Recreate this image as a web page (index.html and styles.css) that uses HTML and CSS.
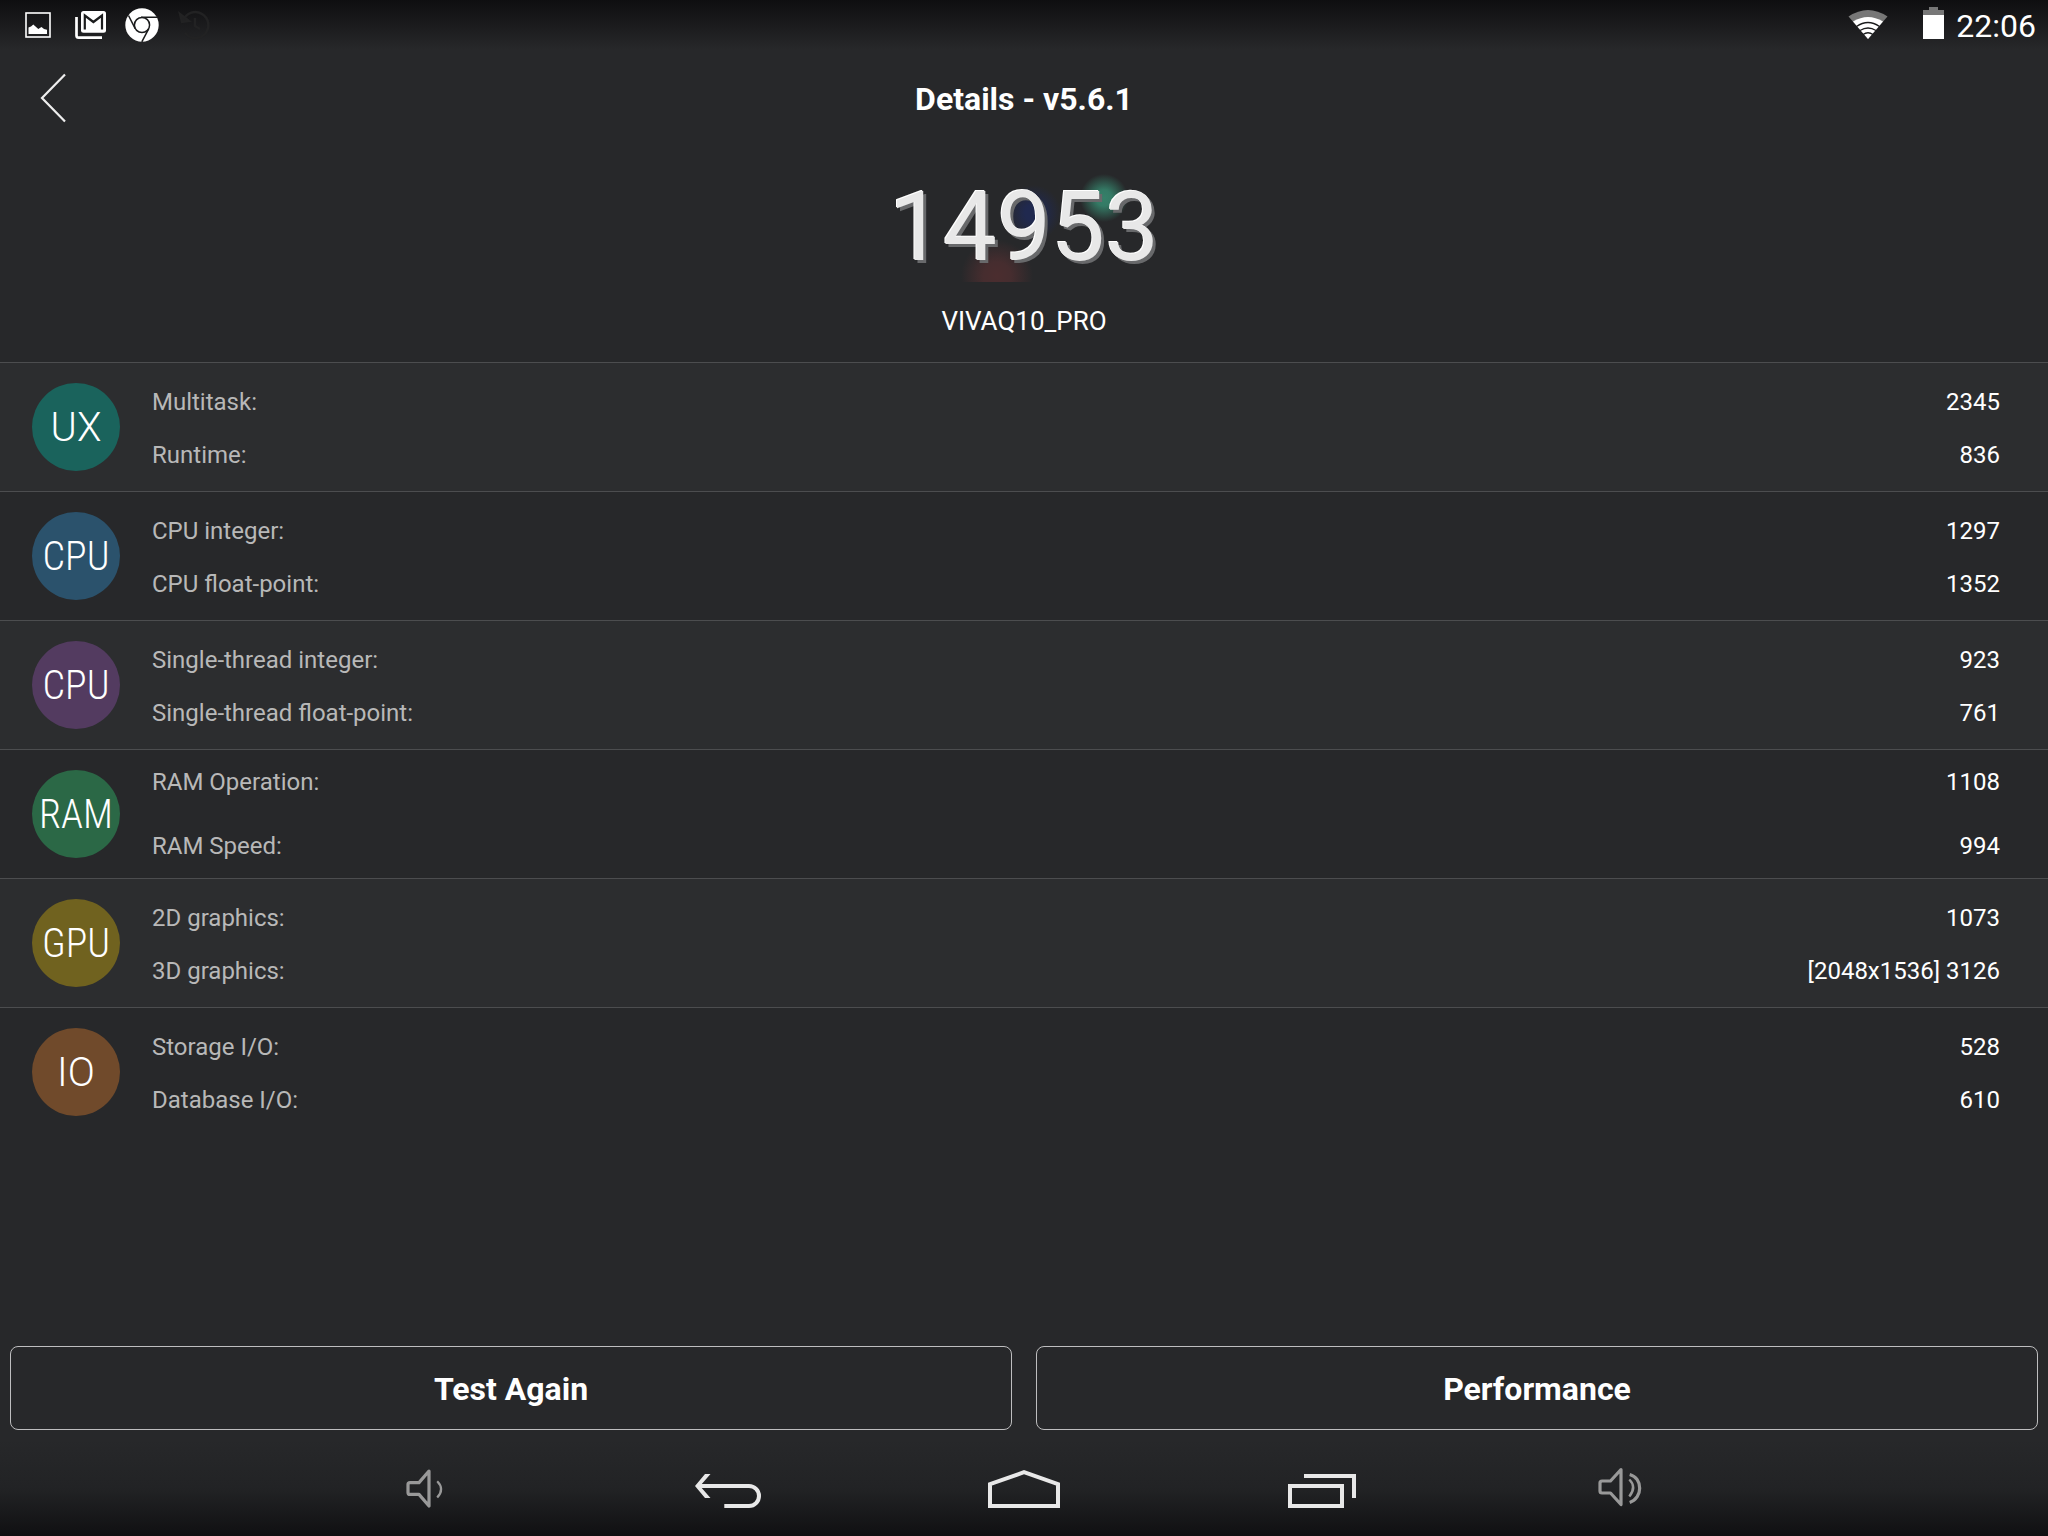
FILE: index.html
```
<!DOCTYPE html>
<html lang="en">
<head>
    <meta charset="UTF-8">
    <meta name="viewport" content="width=device-width, initial-scale=1.0">
    <title>Details - v5.6.1</title>
    <link rel="stylesheet" href="styles.css">
</head>
<body>
    <!-- Status bar -->
    <div class="status-bar">
        <div class="notifications">
            <svg width="36" height="36" viewBox="0 0 36 36">
                <rect x="6" y="6" width="24" height="24" fill="none" stroke="#fff" stroke-width="1.6"/>
                <path d="M8.5 27V20.5L11 19.5L13.3 17.5L18.3 22L21.5 20L24 22L27 22.7V27Z" fill="#fff"/>
            </svg>
            <svg width="36" height="36" viewBox="0 0 36 36">
                <path d="M4.5 10V28.4Q4.5 30.6 6.7 30.6H30" fill="none" stroke="#fff" stroke-width="2.7"/>
                <rect x="9" y="4" width="25" height="21.7" rx="2.5" fill="#fff"/>
                <path d="M12.8 22.5V8.5L21.4 15L30 8.5V22.5" fill="none" stroke="#1b1c1d" stroke-width="2.2"/>
            </svg>
            <svg width="36" height="36" viewBox="0 0 36 36">
                <circle cx="18" cy="18" r="16.7" fill="#fff"/>
                <circle cx="18" cy="18" r="7.6" fill="none" stroke="#1b1c1d" stroke-width="1.5"/>
                <path d="M17 10.2H33.5M4.5 8.5L11.2 21.6M24.8 21.6L17.8 34.8" stroke="#1b1c1d" stroke-width="1.5"/>
            </svg>
            <svg width="36" height="36" viewBox="0 0 36 36" fill="none" stroke="#222223" stroke-width="2.4">
                <path d="M7 14A13 13 0 1 1 9 26"/>
                <path d="M4 7L6 15L13 14Z" fill="#222223"/>
                <path d="M19 11V19L24 22"/>
            </svg>
        </div>
        <div class="system-icons">
            <svg class="wifi" width="40" height="30" viewBox="0 0 40 30">
                <path d="M20 29L0.5 6.5Q20 -6.5 39.5 6.5Z" fill="#777"/>
                <path d="M20 29L5 11.5Q20 2.5 35 11.5Z" fill="#fff"/>
                <path d="M8.5 16.5Q20 8.5 31.5 16.5M12 20.5Q20 15.5 28 20.5M15 24.5Q20 21 25 24.5" fill="none" stroke="#1b1c1d" stroke-width="1.3"/>
            </svg>
            <svg class="battery" width="21" height="32" viewBox="0 0 21 32">
                <path d="M6 0H15V3H21V8H0V3H6Z" fill="#777"/>
                <path d="M0 8H21V32H0Z" fill="#fff"/>
            </svg>
            <span class="clock">22:06</span>
        </div>
    </div>

    <header class="header">
        <button class="back" aria-label="Back">
            <svg width="28" height="50" viewBox="0 0 28 50" fill="none" stroke="#eee" stroke-width="2.2">
                <path d="M25 1.5L2 25L25 48.5"/>
            </svg>
        </button>
        <h1>Details - v5.6.1</h1>
    </header>

    <main>
        <div class="summary">
            <div class="score">14953</div>
            <p class="device">VIVAQ10_PRO</p>
        </div>

        <section class="group">
            <div class="badge wide ux">UX</div>
            <dl>
                <div><dt>Multitask:</dt><dd>2345</dd></div>
                <div><dt>Runtime:</dt><dd>836</dd></div>
            </dl>
        </section>
        <section class="group">
            <div class="badge cpu">CPU</div>
            <dl>
                <div><dt>CPU integer:</dt><dd>1297</dd></div>
                <div><dt>CPU float-point:</dt><dd>1352</dd></div>
            </dl>
        </section>
        <section class="group">
            <div class="badge thread">CPU</div>
            <dl>
                <div><dt>Single-thread integer:</dt><dd>923</dd></div>
                <div><dt>Single-thread float-point:</dt><dd>761</dd></div>
            </dl>
        </section>
        <section class="group spaced">
            <div class="badge ram">RAM</div>
            <dl>
                <div><dt>RAM Operation:</dt><dd>1108</dd></div>
                <div><dt>RAM Speed:</dt><dd>994</dd></div>
            </dl>
        </section>
        <section class="group">
            <div class="badge gpu">GPU</div>
            <dl>
                <div><dt>2D graphics:</dt><dd>1073</dd></div>
                <div><dt>3D graphics:</dt><dd>[2048x1536] 3126</dd></div>
            </dl>
        </section>
        <section class="group">
            <div class="badge wide io">IO</div>
            <dl>
                <div><dt>Storage I/O:</dt><dd>528</dd></div>
                <div><dt>Database I/O:</dt><dd>610</dd></div>
            </dl>
        </section>
    </main>

    <div class="actions">
        <button>Test Again</button>
        <button>Performance</button>
    </div>

    <!-- System navigation -->
    <nav class="nav-bar">
        <button aria-label="Volume down">
            <svg width="96" height="96" viewBox="0 0 96 96" fill="none" stroke="#999" stroke-width="3.2" stroke-linejoin="round">
                <path d="M37 42.6H28Q26 42.6 26 44.6V52.4Q26 54.4 28 54.4H37L47 66V31Z"/>
                <path d="M55.2 41.2Q63 49 55.2 57.6" stroke-width="2.2"/>
            </svg>
        </button>
        <button aria-label="Back">
            <svg width="96" height="96" viewBox="0 0 96 96">
                <path d="M45.3 66H70A10 10 0 0 0 70 46H19" fill="none" stroke="#e8e8e8" stroke-width="4"/>
                <path d="M16 46L26 34H31.5L21 46L31.5 58H26Z" fill="#e8e8e8"/>
            </svg>
        </button>
        <button aria-label="Home">
            <svg width="96" height="96" viewBox="0 0 96 96" fill="none" stroke="#e8e8e8" stroke-width="4">
                <path d="M14 66V44.2L48 32.2L82 44.2V66Z"/>
            </svg>
        </button>
        <button aria-label="Recent apps">
            <svg width="96" height="96" viewBox="0 0 96 96" fill="none" stroke="#e8e8e8" stroke-width="4">
                <rect x="17" y="46" width="52" height="20"/>
                <path d="M31 36H81V58"/>
            </svg>
        </button>
        <button aria-label="Volume up">
            <svg width="96" height="96" viewBox="0 0 96 96" fill="none" stroke="#999" stroke-width="3.2" stroke-linejoin="round">
                <path d="M40.5 41H32Q30 41 30 43V51Q30 53 32 53H40.5L51 64.5V29.5Z"/>
                <path d="M59.3 39.5Q67 47 59.3 56.5" stroke-width="2.4"/>
                <path d="M59.7 34.5C73 38 73 58 59.7 62.5"/>
            </svg>
        </button>
    </nav>
</body>
</html>
```
FILE: styles.css
```
body {
    margin: 0;
    min-height: 100vh;
    display: flex;
    flex-direction: column;
    background-color: #27282a;
    color: #fff;
    font-family: Roboto, "Liberation Sans", sans-serif;
}
button {
    padding: 0;
    border: none;
    background: none;
    color: inherit;
    font-family: inherit;
    cursor: pointer;
}
svg {
    display: block;
}

/* Status bar */
.status-bar {
    display: flex;
    justify-content: space-between;
    align-items: center;
    height: 50px;
    padding: 0 12px 0 20px;
    background: linear-gradient(#0e0e10, #27282a);
}
.notifications {
    display: flex;
    gap: 16px;
}
.system-icons {
    display: flex;
    align-items: center;
}
.wifi {
    margin-right: 35px;
}
.battery {
    margin-right: 12px;
    margin-bottom: 4px;
}
.clock {
    padding-top: 2px;
    font-size: 32px;
}

.header {
    display: grid;
    grid-template-columns: 104px 1fr 104px;
    align-items: center;
    height: 96px;
}
.back {
    padding-left: 40px;
}
h1 {
    margin: 0;
    padding-top: 2px;
    text-align: center;
    font-size: 32px;
    font-weight: bold;
}

/* Total score */
.summary {
    display: flex;
    flex-direction: column;
    align-items: center;
    padding: 22px 0 25px;
}
.score {
    padding-top: 4px;
    font-size: 96px;
    line-height: 110px;
    color: #e8e8e8;
    text-shadow: -1px -1px 0 #fff, 3px 3px 0 #68696b;
    /* soft coloured lights behind the number */
    background-image:
        radial-gradient(circle at 215px 30px, #358069 0, #347a65 8px, rgba(52, 122, 101, 0) 24px),
        radial-gradient(circle at 144px 45px, #20294f 0, #20294f 8px, rgba(32, 41, 79, 0) 28px),
        radial-gradient(circle at 108px 108px, #4b2d2f 0, #462d2f 14px, rgba(70, 45, 47, 0) 36px);
}
.device {
    margin: 23px 0 0;
    font-size: 26px;
    line-height: 32px;
}

/* Result groups */
.group {
    display: flex;
    align-items: center;
    gap: 32px;
    height: 128px;
    padding: 0 48px 0 32px;
    border-top: 1px solid #4c4d4f;
}
.group:nth-of-type(odd) {
    background-color: #2c2d2f;
}
.group dl {
    flex: 1;
    margin: 0;
    padding-top: 4px;
    font-size: 24px;
    line-height: 53px;
}
.group.spaced dl {
    padding-top: 0;
    line-height: 64px;
}
.group dl div {
    display: flex;
    justify-content: space-between;
}
.group dt {
    color: #b8b8b8;
}
.group dd {
    margin: 0;
}

.badge {
    width: 88px;
    height: 88px;
    border-radius: 50%;
    text-align: center;
    font-family: "Roboto Condensed", Roboto, sans-serif;
    font-size: 40px;
    font-weight: 300;
    line-height: 90px;
}
.badge.wide {
    font-family: Roboto, sans-serif;
}
.ux {
    background-color: #1a635c;
}
.cpu {
    background-color: #2b526c;
}
.thread {
    background-color: #533b60;
}
.ram {
    background-color: #2b6846;
}
.gpu {
    background-color: #70621f;
}
.io {
    background-color: #704a2b;
}

.actions {
    display: grid;
    grid-template-columns: 1fr 1fr;
    gap: 24px;
    margin-top: auto;
    padding: 0 10px 10px;
}
.actions button {
    height: 84px;
    padding-top: 2px;
    border: 1px solid #bebebf;
    border-radius: 8px;
    font-size: 32px;
    font-weight: bold;
}

/* System navigation */
.nav-bar {
    display: flex;
    height: 96px;
    padding: 0 13.75%;
    background: linear-gradient(#27282a, #222325 50%, #101012);
}
.nav-bar button {
    flex: 1;
    display: flex;
    justify-content: center;
}
```
